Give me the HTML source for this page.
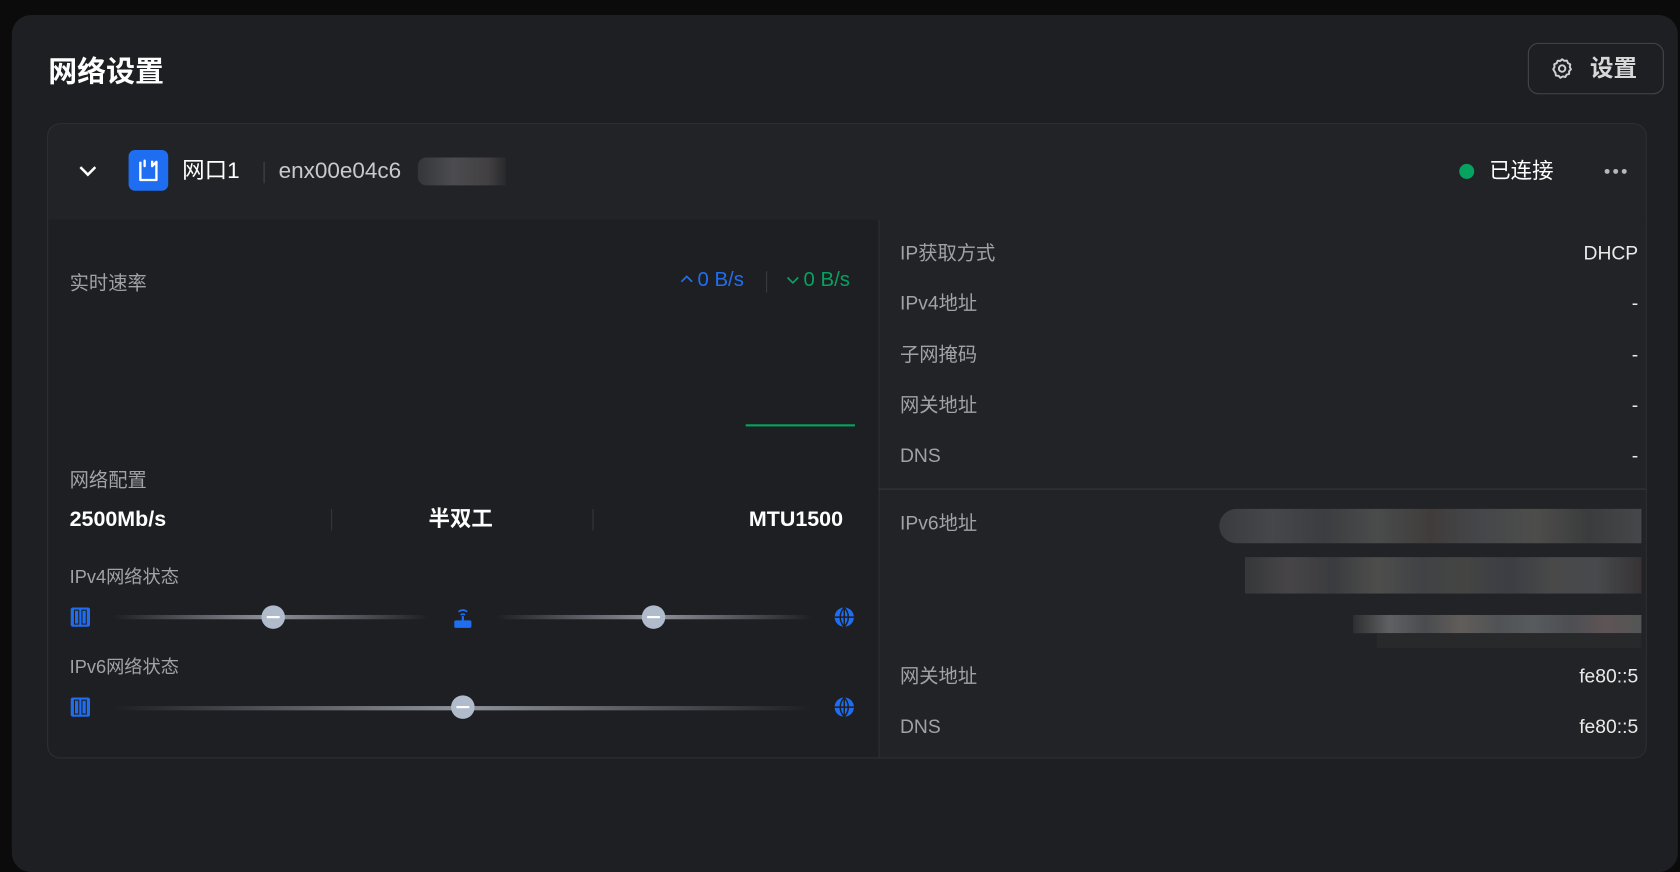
<!DOCTYPE html>
<html><head><meta charset="utf-8"><style>
*{margin:0;padding:0;box-sizing:border-box}
body{width:1680px;height:776px;background:#0b0b0b;font-family:"Liberation Sans","Noto Sans CJK SC",sans-serif;overflow:hidden;position:relative;color:#e8e8e8}
#w{position:absolute;left:0;top:0;width:1568px;height:730px;transform:scale(1.0714);transform-origin:0 0}
.panel{position:absolute;left:11px;top:14px;width:1555px;height:800px;background:#1e1f22;border-radius:18px}
.abs{position:absolute;line-height:24px;white-space:nowrap}
.lab{color:#a0a2a6;font-size:18px}
.val{color:#eaeaea;font-size:18px;text-align:right}
.pix{position:absolute}
</style></head><body><div id="w">
<div class="panel"></div>
<div class="abs" style="left:45px;top:52px;font-size:27px;line-height:30px;font-weight:bold;color:#fff">网络设置</div>
<div class="abs" style="left:1426px;top:40px;width:127px;height:48px;border:1px solid #45464a;border-radius:10px"></div>
<svg class="abs" style="left:1447px;top:53px" width="22" height="22" viewBox="0 0 24 24" fill="none" stroke="#cfd0d2" stroke-width="2"><path d="M12 2.5l2.2 1.6 2.7-.2 1 2.5 2.4 1.3-.5 2.7 1.2 2.4-1.9 2 .1 2.7-2.6.7-1.3 2.4-2.6-.6-2.4 1.4-1.9-2-2.7-.3-.5-2.7L3 12.7l1.3-2.4-.3-2.7 2.5-1.1 1-2.5 2.7.2z" stroke-linejoin="round"/><circle cx="12" cy="12" r="3.3"/></svg>
<div class="abs" style="left:1484px;top:52px;font-size:22px;font-weight:bold;color:#d8d8d8">设置</div>

<div class="abs" style="left:44px;top:115px;width:1493px;height:593px;border:1px solid #2f3034;border-radius:12px;overflow:hidden;background:#1e1f22">
 <div class="abs" style="left:0;top:0;width:1493px;height:89px;background:#222326"></div>
 <div class="abs" style="left:775px;top:89px;width:718px;height:504px;background:#222326;border-left:1px solid #2f3034"></div>
 <div class="abs" style="left:775px;top:340px;width:718px;height:1px;background:#36373b"></div>
</div>
<svg class="abs" style="left:72px;top:151px" width="20" height="16" viewBox="0 0 20 16"><path d="M3 5l7 7 7-7" fill="none" stroke="#fff" stroke-width="2.4"/></svg>
<div class="abs" style="left:120px;top:140px;width:37px;height:38px;background:#1f6ef2;border-radius:6px"></div>
<svg class="abs" style="left:120px;top:140px" width="37" height="38" viewBox="0 0 37 38"><path d="M11 11v17h15V11l-4 4v-5m-7 0v5z" fill="none" stroke="#fff" stroke-width="2.2" stroke-linejoin="round"/></svg>
<div class="abs" style="left:170px;top:148px;font-size:21px;color:#fff">网口1</div>
<div class="abs" style="left:246px;top:151px;width:1px;height:20px;background:#45464a"></div>
<div class="abs" style="left:260px;top:148px;font-size:21px;color:#c8c9cc">enx00e04c6</div>
<div class="abs" style="left:390px;top:147px;width:82px;height:26px;background:linear-gradient(90deg,#3a3b3f,#56565a 40%,#4a4748 80%,#2a2b2e);border-radius:8px 0 0 8px;opacity:.8"></div>
<div class="abs" style="left:1362px;top:153px;width:14px;height:14px;border-radius:50%;background:#05a260"></div>
<div class="abs" style="left:1390px;top:148px;font-size:20px;color:#fff">已连接</div>
<svg class="abs" style="left:1497px;top:157px" width="22" height="6"><circle cx="3" cy="3" r="2.3" fill="#b8b8b8"/><circle cx="11" cy="3" r="2.3" fill="#b8b8b8"/><circle cx="19" cy="3" r="2.3" fill="#b8b8b8"/></svg>

<div class="abs lab" style="left:65px;top:252px">实时速率</div>
<svg class="abs" style="left:634px;top:255px" width="14" height="10"><path d="M2 8l5-5 5 5" fill="none" stroke="#1f6ef2" stroke-width="1.6"/></svg>
<div class="abs" style="left:651px;top:250px;font-size:19px;color:#1f6ef2">0 B/s</div>
<div class="abs" style="left:715px;top:253px;width:1px;height:20px;background:#3a3b3f"></div>
<svg class="abs" style="left:733px;top:257px" width="14" height="10"><path d="M2 2l5 5 5-5" fill="none" stroke="#05a260" stroke-width="1.6"/></svg>
<div class="abs" style="left:750px;top:250px;font-size:19px;color:#05a260">0 B/s</div>
<div class="abs" style="left:696px;top:396px;width:102px;height:2px;background:#05a260"></div>

<div class="abs lab" style="left:65px;top:436px">网络配置</div>
<div class="abs" style="left:65px;top:473px;font-size:20px;font-weight:bold;color:#fff">2500Mb/s</div>
<div class="abs" style="left:309px;top:475px;width:1px;height:20px;background:#36373b"></div>
<div class="abs" style="left:400px;top:473px;font-size:20px;font-weight:bold;color:#fff">半双工</div>
<div class="abs" style="left:553px;top:475px;width:1px;height:20px;background:#36373b"></div>
<div class="abs" style="left:699px;top:473px;font-size:20px;font-weight:bold;color:#fff">MTU1500</div>

<div class="abs lab" style="left:65px;top:527px;font-size:17px">IPv4网络状态</div>
<div class="abs lab" style="left:65px;top:611px;font-size:17px">IPv6网络状态</div>
<svg class="abs" style="left:65px;top:566px" width="20" height="20" viewBox="0 0 20 20"><rect x="1" y="1" width="18" height="18" rx="2" fill="#1f6ef2"/><rect x="4" y="3" width="5" height="14" fill="#1e1f22"/><rect x="11" y="3" width="5" height="14" fill="#1e1f22"/><rect x="5" y="4" width="3" height="12" fill="#1f6ef2"/><rect x="12" y="4" width="3" height="12" fill="#1f6ef2"/></svg>
<div class="abs" style="left:105px;top:574px;width:295px;height:4px;background:linear-gradient(90deg,#1e1f22,#8f939c 50%,#1e1f22)"></div>
<div class="abs" style="left:244px;top:565px;width:22px;height:22px;border-radius:50%;background:#b0bccb"></div><div class="abs" style="left:249px;top:575px;width:12px;height:2px;background:#fff"></div>
<svg class="abs" style="left:423px;top:565px" width="18" height="22" viewBox="0 0 18 22"><path d="M5 6a6 6 0 0 1 8 0M7 9a3 3 0 0 1 4 0" fill="none" stroke="#1f6ef2" stroke-width="1.6"/><rect x="8" y="10" width="2" height="5" fill="#1f6ef2"/><rect x="1" y="14" width="16" height="7" rx="1.5" fill="#1f6ef2"/></svg>
<div class="abs" style="left:463px;top:574px;width:295px;height:4px;background:linear-gradient(90deg,#1e1f22,#8f939c 50%,#1e1f22)"></div>
<div class="abs" style="left:599px;top:565px;width:22px;height:22px;border-radius:50%;background:#b0bccb"></div><div class="abs" style="left:604px;top:575px;width:12px;height:2px;background:#fff"></div>
<svg class="abs" style="left:778px;top:566px" width="20" height="20" viewBox="0 0 20 20"><circle cx="10" cy="10" r="9" fill="#1f6ef2"/><path d="M1 10h18M10 1v18M10 1c-5 5-5 13 0 18M10 1c5 5 5 13 0 18" fill="none" stroke="#1e1f22" stroke-width="1.4"/></svg>
<svg class="abs" style="left:65px;top:650px" width="20" height="20" viewBox="0 0 20 20"><rect x="1" y="1" width="18" height="18" rx="2" fill="#1f6ef2"/><rect x="4" y="3" width="5" height="14" fill="#1e1f22"/><rect x="11" y="3" width="5" height="14" fill="#1e1f22"/><rect x="5" y="4" width="3" height="12" fill="#1f6ef2"/><rect x="12" y="4" width="3" height="12" fill="#1f6ef2"/></svg>
<div class="abs" style="left:105px;top:659px;width:653px;height:4px;background:linear-gradient(90deg,#1e1f22,#8f939c 50%,#1e1f22)"></div>
<div class="abs" style="left:421px;top:649px;width:22px;height:22px;border-radius:50%;background:#b0bccb"></div><div class="abs" style="left:426px;top:659px;width:12px;height:2px;background:#fff"></div>
<svg class="abs" style="left:778px;top:650px" width="20" height="20" viewBox="0 0 20 20"><circle cx="10" cy="10" r="9" fill="#1f6ef2"/><path d="M1 10h18M10 1v18M10 1c-5 5-5 13 0 18M10 1c5 5 5 13 0 18" fill="none" stroke="#1e1f22" stroke-width="1.4"/></svg>

<div class="abs lab" style="left:840px;top:224px">IP获取方式</div><div class="abs val" style="left:1300px;top:224px;width:229px">DHCP</div>
<div class="abs lab" style="left:840px;top:271px">IPv4地址</div><div class="abs val" style="left:1300px;top:271px;width:229px">-</div>
<div class="abs lab" style="left:840px;top:319px">子网掩码</div><div class="abs val" style="left:1300px;top:319px;width:229px">-</div>
<div class="abs lab" style="left:840px;top:366px">网关地址</div><div class="abs val" style="left:1300px;top:366px;width:229px">-</div>
<div class="abs lab" style="left:840px;top:413px">DNS</div><div class="abs val" style="left:1300px;top:413px;width:229px">-</div>
<div class="abs lab" style="left:840px;top:476px">IPv6地址</div>
<div class="pix" style="left:1138px;top:475px;width:394px;height:32px;background:linear-gradient(90deg,#3a3b3f,#45474a,#3b3d40,#4a4b4b,#403c3c,#45474a,#4d4d4b,#3a3c3d,#45474a);border-radius:16px 0 0 16px"></div>
<div class="pix" style="left:1162px;top:520px;width:370px;height:34px;background:linear-gradient(90deg,#3a3b3e,#4d4b4c,#3f4043,#555552,#47484b,#4a4a48,#414249,#505050,#4e5053,#3a3636);opacity:.85"></div>
<div class="pix" style="left:1263px;top:574px;width:269px;height:17px;background:linear-gradient(90deg,#2e2f31,#5f6063,#4b4c4f,#615d5a,#505355,#585b5d,#4d4f53,#5e5455,#545556)"></div>
<div class="pix" style="left:1285px;top:591px;width:247px;height:14px;background:#28292b"></div>
<div class="abs lab" style="left:840px;top:619px">网关地址</div><div class="abs val" style="left:1300px;top:619px;width:229px">fe80::5</div>
<div class="abs lab" style="left:840px;top:666px">DNS</div><div class="abs val" style="left:1300px;top:666px;width:229px">fe80::5</div>
</div></body></html>
